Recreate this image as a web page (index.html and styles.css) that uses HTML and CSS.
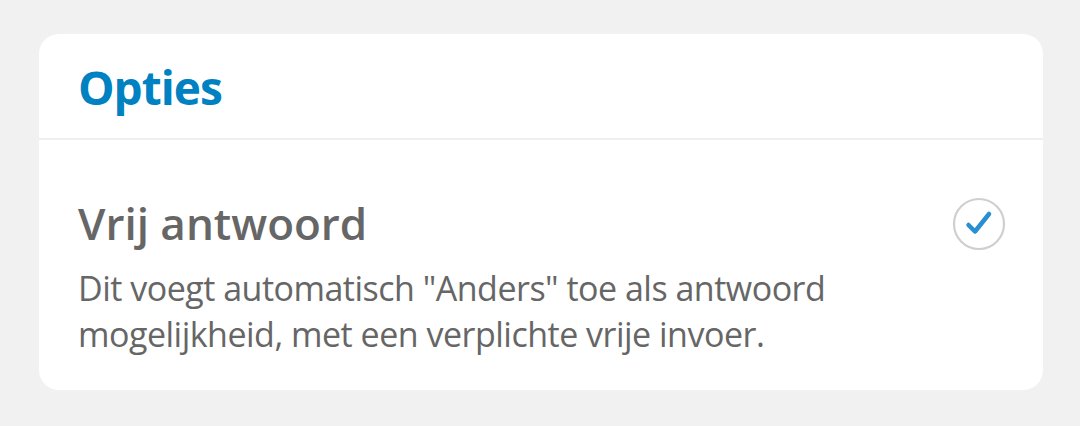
FILE: index.html
```html
<!DOCTYPE html>
<html lang="nl">
<head>
    <meta charset="UTF-8">
    <meta name="viewport" content="width=device-width, initial-scale=1.0">
    <title>Opties</title>
    <link rel="stylesheet" href="styles.css">
</head>
<body>
    <div class="card">
        <div class="card-header">
            <h2>Opties</h2>
        </div>
        <div class="option">
            <div class="option-text">
                <h3>Vrij antwoord</h3>
                <p>Dit voegt automatisch "Anders" toe als antwoord mogelijkheid, met een verplichte vrije invoer.</p>
            </div>
            <!-- round checkbox, checked -->
            <svg class="check" width="56" height="56" viewBox="0 0 56 56">
                <circle cx="28" cy="28" r="25" fill="#fff" stroke="#cfcfcf" stroke-width="2.2"/>
                <path d="M17.5 29 L24 35.5 L38 18" fill="none" stroke="#2a8fd2" stroke-width="4.5" stroke-linecap="round" stroke-linejoin="round"/>
            </svg>
        </div>
    </div>
</body>
</html>
```

FILE: styles.css
```css
body {
    margin: 0;
    padding: 34px 37px 37px 39px;
    background-color: #f1f1f1;
    font-family: "Open Sans", "Noto Sans", sans-serif;
}
.card {
    background-color: #fff;
    border-radius: 20px;
    overflow: hidden;
}
.card-header {
    padding: 25px 39px 23px;
    border-bottom: 2px solid #efefef;
}
.card-header h2 {
    margin: 0;
    font-size: 46px;
    line-height: 56px;
    font-weight: 700;
    color: #0081c2;
    letter-spacing: -1px;
}
.option {
    display: flex;
    align-items: flex-start;
    padding: 55px 36px 33px 39px;
}
.option-text {
    flex: 1;
}
.option h3 {
    margin: 0 0 14px;
    font-size: 44px;
    line-height: 56px;
    font-weight: 600;
    color: #666;
}
.option p {
    margin: 0;
    width: 820px;
    font-size: 34px;
    line-height: 46px;
    color: #666;
    letter-spacing: -0.5px;
}
.check {
    margin-top: 1px;
}
```
